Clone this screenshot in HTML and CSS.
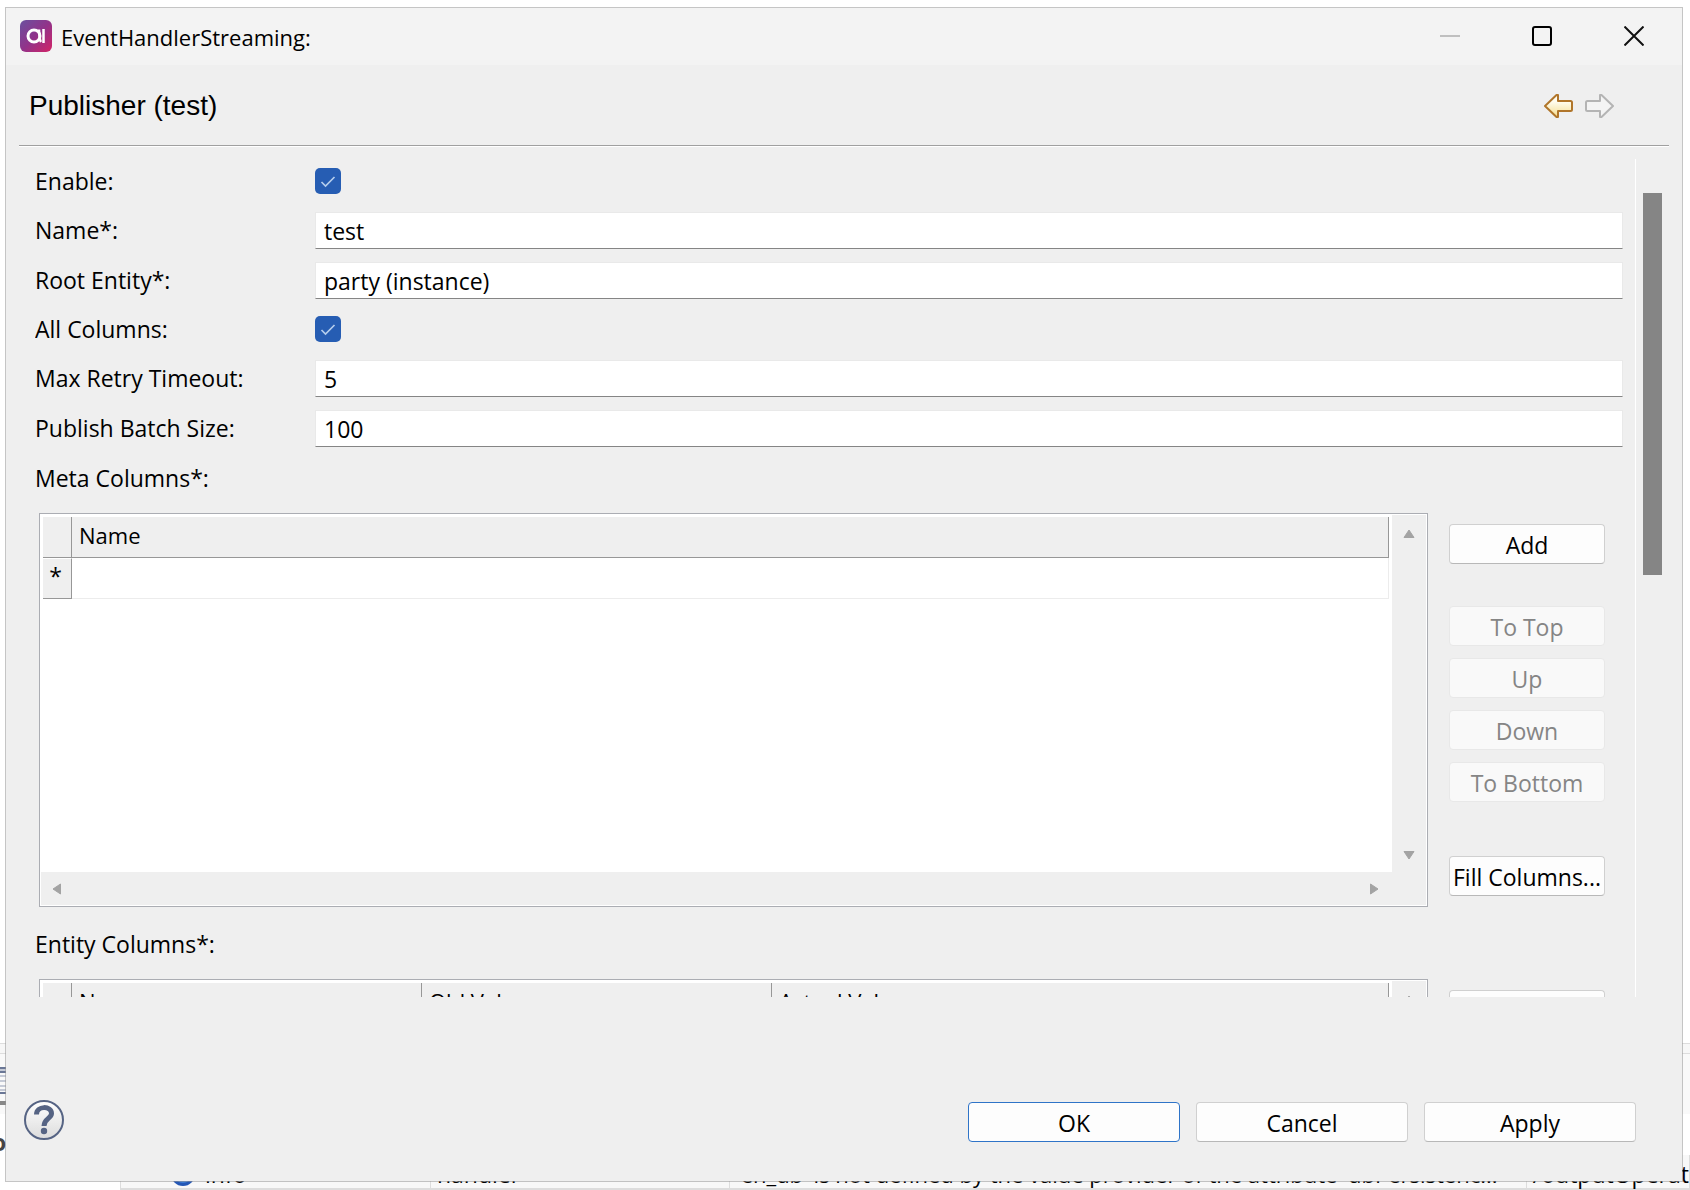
FILE: index.html
```html
<!DOCTYPE html>
<html lang="en">
<head>
  <meta charset="UTF-8">
  <meta name="viewport" content="width=device-width, initial-scale=1.0">
  <title>EventHandlerStreaming</title>
  <link rel="stylesheet" href="styles.css">
</head>
<body>
  <!-- main window behind the dialog -->
  <div class="workspace">
    <div class="tab-strip"></div>
    <div class="toolbar">
      <svg class="toolbar-icon" width="7" height="40" viewBox="0 0 7 40">
        <path d="M0 1h7M0 5h7M0 26h7" stroke="#6a7796" stroke-width="2"/>
        <path d="M0 3h7M0 9h7M0 14h7M0 19h7M0 23h7" stroke="#c5cad6" stroke-width="2"/>
        <path d="M0 36h7" stroke="#888" stroke-width="4"/>
      </svg>
    </div>
    <div class="panel-title">o</div>
    <div class="log-row">
      <span class="log-level">
        <svg width="24" height="24" viewBox="0 0 24 24"><circle cx="12" cy="12" r="12" fill="#2457b5"/><circle cx="12" cy="13" r="8" fill="#3f7fd6"/></svg>
        info
      </span>
      <span class="log-source">handler</span>
      <span class="log-message">'eh_db' is not defined by the value provider of the attribute 'dbPersistenc...</span>
      <span class="log-path">/outputOperat</span>
    </div>
  </div>

  <div class="dialog" role="dialog" aria-labelledby="dialogTitle">
    <header class="title-bar">
      <svg class="app-icon" width="32" height="32" viewBox="0 0 32 32">
        <defs>
          <linearGradient id="appFill" x1="0" y1="0" x2="1" y2="1">
            <stop offset="0" stop-color="#6a519f"/>
            <stop offset="0.5" stop-color="#91338a"/>
            <stop offset="1" stop-color="#d32366"/>
          </linearGradient>
        </defs>
        <rect width="32" height="32" rx="6" fill="url(#appFill)"/>
        <circle cx="14" cy="16" r="6" fill="none" stroke="#fff" stroke-width="3"/>
        <path d="M19 9.500Q19.500 20 21 22M23.500 9v14" fill="none" stroke="#fff" stroke-width="2.500"/>
      </svg>
      <span class="window-title" id="dialogTitle">EventHandlerStreaming:</span>
      <button class="window-button" aria-label="Minimize" disabled>
        <svg width="20" height="20" viewBox="0 0 20 20"><path d="M0 10h20" stroke="#bfbfbf" stroke-width="2"/></svg>
      </button>
      <button class="window-button" aria-label="Maximize">
        <svg width="20" height="20" viewBox="0 0 20 20"><rect x="1" y="1" width="18" height="18" rx="2" fill="none" stroke="#000" stroke-width="2"/></svg>
      </button>
      <button class="window-button" aria-label="Close">
        <svg width="20" height="20" viewBox="0 0 20 20"><path d="M0.500 0.500l19 19M19.500 0.500l-19 19" stroke="#111" stroke-width="2"/></svg>
      </button>
    </header>

    <div class="page-header">
      <h1>Publisher (test)</h1>
      <button class="nav-button" aria-label="Back">
        <svg width="30" height="26" viewBox="0 0 30 26">
          <defs>
            <linearGradient id="backFill" x1="0" y1="0" x2="0" y2="1">
              <stop offset="0.300" stop-color="#fffdf0"/>
              <stop offset="1" stop-color="#f5dc8c"/>
            </linearGradient>
          </defs>
          <path d="M1 13L12.500 2H14V8H26.500Q28 8 28 9.500V16.500Q28 18 26.500 18H14V24H12.500Z" fill="url(#backFill)" stroke="#b0752a" stroke-width="2" stroke-linejoin="round"/>
        </svg>
      </button>
      <button class="nav-button" aria-label="Forward" disabled>
        <svg width="30" height="26" viewBox="0 0 30 26">
          <path d="M29 13L17.500 2H16V8H3.500Q2 8 2 9.500V16.500Q2 18 3.500 18H16V24H17.500Z" fill="#f4f4f4" stroke="#b4b4b4" stroke-width="2" stroke-linejoin="round"/>
        </svg>
      </button>
    </div>

    <div class="scroll-area">
      <form class="form" id="publisherForm">
        <div class="fields">
          <label for="enable">Enable:</label>
          <input type="checkbox" id="enable" class="check" checked>
          <label for="name">Name*:</label>
          <input type="text" id="name" class="text-input" value="test">
          <label for="rootEntity">Root Entity*:</label>
          <input type="text" id="rootEntity" class="text-input" value="party (instance)">
          <label for="allColumns">All Columns:</label>
          <input type="checkbox" id="allColumns" class="check" checked>
          <label for="retryTimeout">Max Retry Timeout:</label>
          <input type="text" id="retryTimeout" class="text-input" value="5">
          <label for="batchSize">Publish Batch Size:</label>
          <input type="text" id="batchSize" class="text-input" value="100">
        </div>

        <section class="columns-section">
          <h2 id="metaLabel">Meta Columns*:</h2>
          <div class="columns-body">
            <div class="table-box">
              <div class="table-view">
                <table aria-labelledby="metaLabel">
                  <thead>
                    <tr><th class="row-head"></th><th>Name</th></tr>
                  </thead>
                  <tbody>
                    <tr><td class="row-head">*</td><td></td></tr>
                  </tbody>
                </table>
              </div>
              <div class="bar-vertical">
                <svg width="12" height="10" viewBox="0 0 12 10"><path d="M6 1L11 8.500H1Z" class="arrow"/></svg>
                <svg width="12" height="10" viewBox="0 0 12 10"><path d="M6 9L11 1.500H1Z" class="arrow"/></svg>
              </div>
              <div class="bar-horizontal">
                <svg width="10" height="12" viewBox="0 0 10 12"><path d="M1 6L8.500 1V11Z" class="arrow"/></svg>
                <svg width="10" height="12" viewBox="0 0 10 12"><path d="M9 6L1.500 1V11Z" class="arrow"/></svg>
              </div>
            </div>
            <div class="side-buttons">
              <button type="button" class="button">Add</button>
              <div class="button-group">
                <button type="button" class="button" disabled>To Top</button>
                <button type="button" class="button" disabled>Up</button>
                <button type="button" class="button" disabled>Down</button>
                <button type="button" class="button" disabled>To Bottom</button>
              </div>
              <button type="button" class="button">Fill Columns...</button>
            </div>
          </div>
        </section>

        <section class="columns-section">
          <h2 id="entityLabel">Entity Columns*:</h2>
          <div class="columns-body">
            <div class="table-box">
              <div class="table-view">
                <table aria-labelledby="entityLabel">
                  <thead>
                    <tr><th class="row-head"></th><th class="value-head">Name</th><th class="value-head">Old Value</th><th>Actual Value</th></tr>
                  </thead>
                </table>
              </div>
              <div class="bar-vertical">
                <svg width="12" height="10" viewBox="0 0 12 10"><path d="M6 1L11 8.500H1Z" class="arrow"/></svg>
              </div>
              <div class="bar-horizontal"></div>
            </div>
            <div class="side-buttons">
              <button type="button" class="button" aria-label="Add entity column"></button>
            </div>
          </div>
        </section>
      </form>
      <div class="page-scrollbar"><div class="thumb"></div></div>
    </div>

    <footer class="footer">
      <button class="help-button" aria-label="Help">
        <svg width="40" height="40" viewBox="0 0 40 40">
          <defs>
            <linearGradient id="helpFill" x1="0" y1="0" x2="0" y2="1">
              <stop offset="0" stop-color="#fff"/>
              <stop offset="1" stop-color="#dcdcdc"/>
            </linearGradient>
          </defs>
          <circle cx="20" cy="20" r="19" fill="url(#helpFill)" stroke="#566484" stroke-width="2"/>
          <path d="M12.500 14.500C12.500 5.500 27.500 5.500 27.500 13.500C27.500 18.500 20 18.500 20 26" fill="none" stroke="#566484" stroke-width="5"/>
          <circle cx="20" cy="31" r="3.200" fill="#566484"/>
        </svg>
      </button>
      <button class="button primary">OK</button>
      <button class="button">Cancel</button>
      <button class="button">Apply</button>
    </footer>
  </div>
</body>
</html>
```
FILE: styles.css
```css
* {
  box-sizing: border-box;
}

body {
  margin: 0;
  height: 100vh;
  padding: 7px 7px 8px 5px;
  display: flex;
  position: relative;
  overflow: hidden;
  background-color: #fff;
  color: #000;
  font-family: "Open Sans", "Noto Sans", sans-serif;
  font-size: 23px;
  line-height: 30px;
}

button,
input {
  font: inherit;
  color: inherit;
}

svg {
  display: block;
}

/* window behind the dialog */
.workspace {
  position: absolute;
  inset: 0;
  display: flex;
  flex-direction: column;
  justify-content: flex-end;
  overflow: hidden;
}

.tab-strip {
  height: 11px;
  border-top: 1px solid #ddd;
  border-bottom: 1px solid #ddd;
  background-color: #f7f7f7;
}

.toolbar {
  height: 60px;
  padding-top: 13px;
  background-color: #f9f9f9;
}

.panel-title {
  height: 41px;
  margin-left: -8px;
  line-height: 56px;
  font-weight: bold;
  color: #444;
}

.log-row {
  height: 35px;
  margin-left: 120px;
  display: flex;
  line-height: 38px;
  white-space: nowrap;
  border-left: 1px solid #ddd;
  border-bottom: 2px solid #ddd;
  background-color: #f8f8f8;
}

.log-row span {
  border-right: 1px solid #ddd;
  padding-left: 6px;
}

.log-row .log-level {
  display: flex;
  align-items: center;
  gap: 10px;
  width: 311px;
  padding: 4px 0 0 50px;
}

.log-row .log-source {
  width: 300px;
}

.log-row .log-message {
  width: 800px;
  font-size: 22px;
}

.log-row .log-path {
  flex: 1;
}

/* dialog */
.dialog {
  position: relative;
  flex: 1;
  display: flex;
  flex-direction: column;
  border: 1px solid rgba(150, 150, 150, 0.55);
  background-color: #efefef;
  background-clip: padding-box;
}

.title-bar {
  display: flex;
  align-items: center;
  height: 57px;
  padding: 0 2px 2px 14px;
  background-color: #f3f3f3;
}

.window-title {
  flex: 1;
  margin-left: 9px;
  padding-top: 2px;
  font-size: 22px;
}

.window-button {
  display: flex;
  justify-content: center;
  align-items: center;
  width: 92px;
  height: 50px;
  border: none;
  background: none;
}

.page-header {
  display: flex;
  align-items: center;
  gap: 10px;
  height: 81px;
  margin: 0 13px;
  padding: 2px 55px 0 10px;
  border-bottom: 1px solid #a0a0a0;
  box-shadow: 0 1px #fff;
}

.page-header h1 {
  flex: 1;
  margin: 0;
  font-family: "Liberation Sans", Arial, sans-serif;
  font-size: 28px;
  font-weight: normal;
}

.nav-button,
.help-button {
  padding: 0;
  border: none;
  background: none;
}

.scroll-area {
  flex: 1;
  min-height: 0;
  display: flex;
  margin: 13px 19px 0 29px;
  overflow: hidden;
}

.form {
  flex: 1;
  padding: 5px 12px 0 0;
}

.fields {
  display: grid;
  grid-template-columns: 280px 1fr;
  row-gap: 13px;
  align-items: center;
}

.fields label {
  padding-bottom: 2px;
}

.check {
  appearance: none;
  width: 26px;
  height: 26px;
  margin: 4px 0 5px;
  border-radius: 5px;
  background: #265db3 url("data:image/svg+xml,%3Csvg xmlns='http://www.w3.org/2000/svg' viewBox='0 0 26 26'%3E%3Cpath d='M6.500 14l4 4 9-9' fill='none' stroke='%23b4cdec' stroke-width='1.700'/%3E%3C/svg%3E");
}

.text-input {
  width: 100%;
  height: 37px;
  padding: 0 8px;
  border: 1px solid #e9e9e9;
  border-bottom-color: #858585;
  background-color: #fff;
  outline: none;
}

.columns-section {
  padding-top: 13px;
}

.columns-section + .columns-section {
  padding-top: 19px;
}

.columns-section h2 {
  margin: 0 0 16px;
  font-size: 23px;
  font-weight: normal;
  line-height: 37px;
}

.columns-body {
  display: flex;
  gap: 21px;
  padding: 0 18px 0 4px;
}

.table-box {
  flex: 1;
  display: grid;
  grid-template-columns: 1fr 34px;
  grid-template-rows: 1fr 33px;
  height: 394px;
  padding: 1px;
  border: 1px solid #abadb3;
  background-color: #fff;
}

.table-view {
  padding: 2px 3px 0 2px;
}

table {
  width: 100%;
  table-layout: fixed;
  border-collapse: separate;
  border-spacing: 0;
}

th,
td {
  height: 41px;
  padding: 0 7px;
  text-align: left;
  font-weight: normal;
  border-right: 1px solid #ececec;
  border-bottom: 1px solid #ececec;
}

th {
  padding-bottom: 5px;
  font-size: 22px;
  border-color: #979797;
  background-color: #efefef;
}

.row-head {
  width: 29px;
  padding: 0 3px 6px 0;
  text-align: center;
  border-color: #979797;
  background-color: #efefef;
}

td.row-head {
  border-top: 1px solid #fff;
}

.value-head {
  width: 350px;
}

.bar-vertical,
.bar-horizontal {
  display: flex;
  justify-content: space-between;
  align-items: center;
  background-color: #efefef;
}

.bar-vertical {
  flex-direction: column;
  padding: 14px 0 12px;
}

.bar-horizontal {
  grid-column: 1 / 3;
  padding: 0 47px 0 11px;
}

.arrow {
  fill: #a3a3a3;
  stroke: #a3a3a3;
  stroke-linejoin: round;
}

.side-buttons {
  width: 156px;
  padding-top: 11px;
}

.button {
  width: 100%;
  height: 40px;
  padding: 2px 0 0;
  border: 1px solid #d0d0d0;
  border-bottom-color: #b8b8b8;
  border-radius: 4px;
  background-color: #fdfdfd;
  white-space: nowrap;
}

.button:disabled {
  border-color: #e8e8e8;
  background-color: #f9f9f9;
  color: #858585;
}

.button-group {
  display: grid;
  gap: 12px;
  margin: 42px 0 54px;
}

.page-scrollbar {
  width: 28px;
  padding: 34px 0 0 7px;
  border-left: 1px solid #fff;
}

.thumb {
  width: 19px;
  height: 382px;
  background-color: #858585;
}

.footer {
  display: flex;
  align-items: flex-start;
  gap: 16px;
  padding: 105px 46px 39px 18px;
}

.footer .button {
  width: 212px;
}

.help-button {
  height: 40px;
  margin: -2px auto 0 0;
}

.footer .primary {
  border-color: #2f74c8;
}
```
